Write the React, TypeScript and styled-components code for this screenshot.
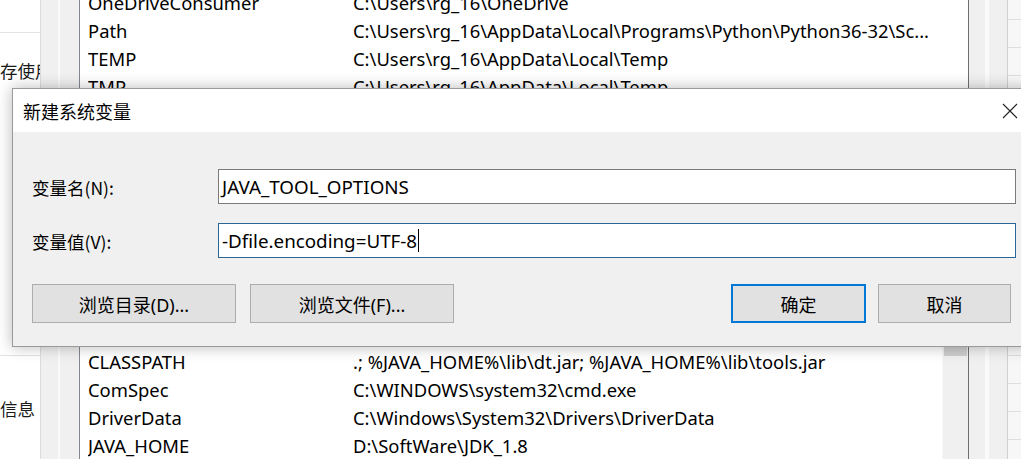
import React from "react";
import styled, { createGlobalStyle } from "styled-components";

const FONT = `"Noto Sans", "Noto Sans CJK SC", sans-serif`;
const CJK = `"Noto Sans CJK SC", "Noto Sans", sans-serif`;

const Global = createGlobalStyle`
  html, body { margin: 0; padding: 0; background: #ffffff; }
  body { width: 1021px; height: 459px; overflow: hidden; font-family: ${FONT}; }
  * { box-sizing: border-box; }
`;

const Desktop = styled.div`
  position: relative;
  width: 1021px;
  height: 459px;
  overflow: hidden;
  display: flex;
  flex-direction: row;
  background: #ffffff;
`;

const LeftPanel = styled.div`
  width: 40px;
  flex: none;
  display: flex;
  flex-direction: column;
  background: #ffffff;
  overflow: hidden;
`;

const LeftSection = styled.div<{ $h: number; $line?: boolean; $top?: number }>`
  height: ${(p) => p.$h}px;
  flex: none;
  border-bottom: ${(p) => (p.$line ? "1px solid #e3e3e3" : "none")};
  display: flex;
  align-items: ${(p) => (p.$top !== undefined ? "flex-start" : "center")};
  padding-top: ${(p) => p.$top ?? 0}px;
`;

const LeftText = styled.span`
  font-family: ${CJK};
  font-size: 17.5px;
  color: #1a1a1a;
  white-space: nowrap;
`;

const Strip = styled.div`
  width: 39px;
  flex: none;
  background: linear-gradient(
    to right,
    #dcdcdc 0px,
    #dcdcdc 1px,
    #f0f0f0 1px,
    #f0f0f0 18px,
    #fafafa 18px,
    #fafafa 20px,
    #f0f0f0 20px
  );
`;

const ListColumn = styled.div`
  width: 890px;
  flex: none;
  display: flex;
  flex-direction: column;
  border-left: 1px solid #828790;
  border-right: 1px solid #6e6e6e;
  background: #ffffff;
`;

const TopList = styled.div`
  height: 100px;
  flex: none;
  display: flex;
  flex-direction: column;
  justify-content: flex-end;
  overflow: hidden;
`;

const Hidden = styled.div`
  height: 247px;
  flex: none;
  background: #f0f0f0;
`;

const BottomList = styled.div`
  flex: 1;
  display: flex;
  flex-direction: row;
  overflow: hidden;
`;

const Rows = styled.div`
  flex: 1;
  display: flex;
  flex-direction: column;
`;

const Row = styled.div`
  height: 28px;
  flex: none;
  display: grid;
  grid-template-columns: 265px 1fr;
  padding-left: 8px;
  align-items: center;
  font-family: ${FONT};
  font-size: 18.4px;
  color: #000000;
  white-space: nowrap;
`;

const Cell = styled.span`
  overflow: hidden;
`;

const ScrollTrack = styled.div`
  width: 26px;
  flex: none;
  background: #f0f0f0;
  border-left: 1px solid #f7f7f7;
  display: flex;
  flex-direction: column;
  align-items: center;
`;

const Thumb = styled.div`
  width: 23px;
  height: 9px;
  background: #cdcdcd;
`;

const RightStrip = styled.div`
  width: 39px;
  flex: none;
  background: linear-gradient(
    to right,
    #f0f0f0 0px,
    #f0f0f0 16px,
    #fafafa 16px,
    #fafafa 20px,
    #f0f0f0 20px
  );
  border-right: 1px solid #d0d0d0;
`;

const FarRight = styled.div`
  flex: 1;
  background: repeating-linear-gradient(
    to bottom,
    #f7f7f7 0px,
    #f7f7f7 19px,
    #dedede 19px,
    #dedede 20px,
    #f7f7f7 20px,
    #f7f7f7 28px
  );
`;

/* ---------- Dialog ---------- */

const Dialog = styled.div`
  position: absolute;
  left: 12px;
  top: 88px;
  width: 1021px;
  height: 259px;
  border: 1px solid #9a9a9a;
  background: #f0f0f0;
  box-shadow: 0 0 14px rgba(0, 0, 0, 0.28);
  display: flex;
  flex-direction: column;
  font-family: ${CJK};
`;

const TitleBar = styled.div`
  height: 43px;
  flex: none;
  background: #ffffff;
  display: flex;
  align-items: center;
  justify-content: space-between;
  padding-left: 10px;
`;

const Title = styled.span`
  font-family: ${CJK};
  font-size: 18px;
  color: #000000;
`;

const CloseButton = styled.div`
  width: 45px;
  height: 43px;
  display: flex;
  align-items: center;
  justify-content: center;
`;

const Body = styled.div`
  flex: 1;
  display: flex;
  flex-direction: column;
  padding: 37px 16px 0 19px;
`;

const FieldGrid = styled.div`
  display: grid;
  grid-template-columns: 186px 1fr;
  row-gap: 19px;
  align-items: center;
`;

const Label = styled.label`
  font-family: ${CJK};
  font-size: 17.5px;
  color: #000000;
  padding-top: 2px;
`;

const Input = styled.div<{ $focused?: boolean }>`
  height: 35px;
  border: 1px solid ${(p) => (p.$focused ? "#2a6796" : "#7a7a7a")};
  background: #ffffff;
  display: flex;
  align-items: center;
  padding-left: 3px;
  font-family: ${FONT};
  font-size: 18.8px;
  color: #000000;
  white-space: nowrap;
`;

const Caret = styled.span`
  display: inline-block;
  width: 1px;
  height: 23px;
  background: #000000;
  margin-left: 1px;
`;

const ButtonRow = styled.div`
  margin-top: 26px;
  display: flex;
  align-items: center;
  justify-content: space-between;
  padding-right: 5px;
`;

const ButtonGroup = styled.div<{ $gap: number }>`
  display: flex;
  gap: ${(p) => p.$gap}px;
`;

const Button = styled.div<{ $w: number; $primary?: boolean }>`
  width: ${(p) => p.$w}px;
  height: 39px;
  background: #e1e1e1;
  border: ${(p) => (p.$primary ? "2px solid #0078d7" : "1px solid #adadad")};
  display: flex;
  align-items: center;
  justify-content: center;
  font-family: ${FONT};
  font-size: 18px;
  color: #000000;
`;

export default function App() {
  return (
    <>
      <Global />
      <Desktop>
        <LeftPanel>
          <LeftSection $h={33} $line />
          <LeftSection $h={74}>
            <LeftText>存使用</LeftText>
          </LeftSection>
          <LeftSection $h={249} $line />
          <LeftSection $h={103} $top={40}>
            <LeftText>信息</LeftText>
          </LeftSection>
        </LeftPanel>
        <Strip />
        <ListColumn>
          <TopList>
            <Row>
              <Cell>OneDriveConsumer</Cell>
              <Cell>C:\Users\rg_16\OneDrive</Cell>
            </Row>
            <Row>
              <Cell>Path</Cell>
              <Cell>C:\Users\rg_16\AppData\Local\Programs\Python\Python36-32\Sc...</Cell>
            </Row>
            <Row>
              <Cell>TEMP</Cell>
              <Cell>C:\Users\rg_16\AppData\Local\Temp</Cell>
            </Row>
            <Row>
              <Cell>TMP</Cell>
              <Cell>C:\Users\rg_16\AppData\Local\Temp</Cell>
            </Row>
          </TopList>
          <Hidden />
          <BottomList>
            <Rows>
              <Row>
                <Cell>CLASSPATH</Cell>
                <Cell>.; %JAVA_HOME%\lib\dt.jar; %JAVA_HOME%\lib\tools.jar</Cell>
              </Row>
              <Row>
                <Cell>ComSpec</Cell>
                <Cell>C:\WINDOWS\system32\cmd.exe</Cell>
              </Row>
              <Row>
                <Cell>DriverData</Cell>
                <Cell>C:\Windows\System32\Drivers\DriverData</Cell>
              </Row>
              <Row>
                <Cell>JAVA_HOME</Cell>
                <Cell>D:\SoftWare\JDK_1.8</Cell>
              </Row>
            </Rows>
            <ScrollTrack>
              <Thumb />
            </ScrollTrack>
          </BottomList>
        </ListColumn>
        <RightStrip />
        <FarRight />

        <Dialog>
          <TitleBar>
            <Title>新建系统变量</Title>
            <CloseButton>
              <svg width="16" height="16" viewBox="0 0 16 16">
                <path d="M1 1 L15 15 M15 1 L1 15" stroke="#222" strokeWidth="1.1" fill="none" />
              </svg>
            </CloseButton>
          </TitleBar>
          <Body>
            <FieldGrid>
              <Label>变量名(N):</Label>
              <Input>JAVA_TOOL_OPTIONS</Input>
              <Label>变量值(V):</Label>
              <Input $focused>
                -Dfile.encoding=UTF-8
                <Caret />
              </Input>
            </FieldGrid>
            <ButtonRow>
              <ButtonGroup $gap={14}>
                <Button $w={204}>浏览目录(D)...</Button>
                <Button $w={204}>浏览文件(F)...</Button>
              </ButtonGroup>
              <ButtonGroup $gap={12}>
                <Button $w={135} $primary>确定</Button>
                <Button $w={133}>取消</Button>
              </ButtonGroup>
            </ButtonRow>
          </Body>
        </Dialog>
      </Desktop>
    </>
  );
}
